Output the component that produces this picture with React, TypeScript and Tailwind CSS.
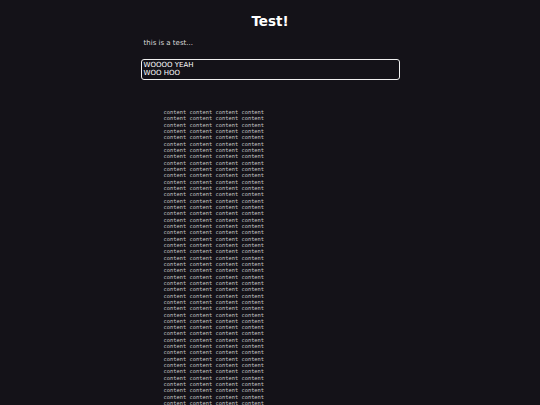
import React from "react";

export default function App() {
  const lines = Array.from({ length: 60 }, () => "content content content content");
  return (
    <div className="min-h-[405px] w-full bg-[#141218] text-[#e6e6e6] overflow-hidden" style={{ fontFamily: '"DejaVu Sans", sans-serif' }}>
      <div className="mx-auto w-[259px] pt-[13px]">
        <h1 className="text-center text-[13.5px] font-bold leading-[16px] text-white">Test!</h1>
        <p className="mt-[10px] pl-[3px] text-[7px] leading-[9px] text-[#d8d8d8]">this is a test...</p>
        <div className="mt-[11px] h-[21px] rounded-[3px] border-[1.5px] border-[#f0f0f0] px-[2px] pt-[1px] text-[7px] leading-[8px] text-white whitespace-pre">
          {"WOOOO YEAH\nWOO HOO"}
        </div>
        <pre className="mt-[29px] pl-[23px] text-[5.4px] leading-[6.33px] text-[#c4c4c4]" style={{ fontFamily: '"DejaVu Sans Mono", monospace' }}>
          {lines.join("\n")}
        </pre>
      </div>
    </div>
  );
}
